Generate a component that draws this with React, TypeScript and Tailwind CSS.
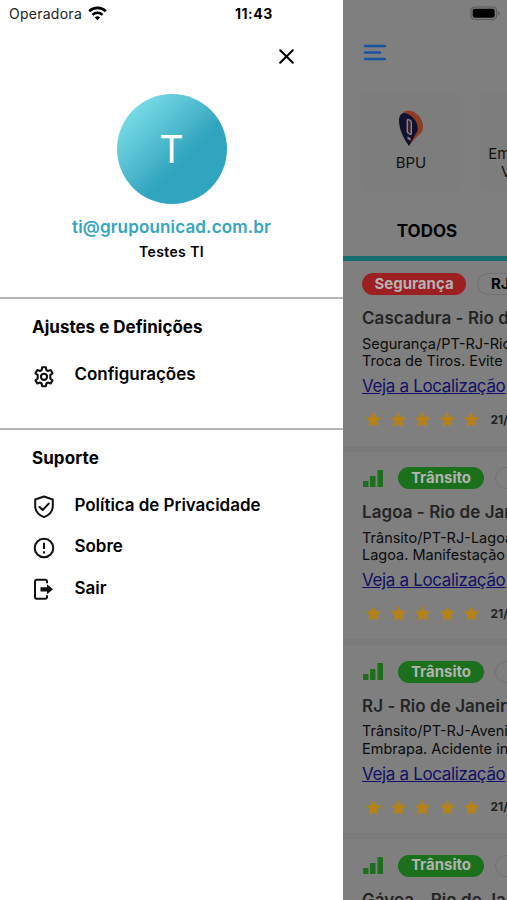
import type { ReactNode } from "react";

type Alert = {
  category: string;
  tone: "danger" | "traffic";
  tag?: string;
  title: string;
  lines: string[];
  date: string;
};

const ALERTS: Alert[] = [
  { category: "Segurança", tone: "danger", tag: "RJ", title: "Cascadura - Rio de", lines: ["Segurança/PT-RJ-Rio", "Troca de Tiros. Evite"], date: "21/1" },
  { category: "Trânsito", tone: "traffic", title: "Lagoa - Rio de Jan", lines: ["Trânsito/PT-RJ-Lagoa", "Lagoa. Manifestação"], date: "21/1" },
  { category: "Trânsito", tone: "traffic", title: "RJ - Rio de Janeiro", lines: ["Trânsito/PT-RJ-Aveni", "Embrapa. Acidente in"], date: "21/1" },
  { category: "Trânsito", tone: "traffic", title: "Gávea - Rio de Jan", lines: [], date: "21/1" }
];

function WifiIcon() {
  return (
    <svg width="19" height="15" viewBox="0 0 19 15" fill="none" stroke="#000">
      <path d="M1.2 5.3a12 12 0 0 1 16.6 0" strokeWidth="2.7" />
      <path d="M4.4 8.8a7.4 7.4 0 0 1 10.2 0" strokeWidth="2.5" />
      <path d="M9.5 14.2 6.8 11.4a4 4 0 0 1 5.4 0Z" fill="#000" stroke="none" />
    </svg>
  );
}

function BatteryIcon() {
  return (
    <svg width="31" height="15" viewBox="0 0 31 15">
      <rect x="1" y="1" width="25.5" height="12.5" rx="3.6" fill="none" stroke="#5a5a5a" strokeWidth="1.2" />
      <rect x="2.7" y="2.7" width="22" height="9" rx="2" fill="#000" />
      <path d="M28 5v4.6c1-.4 1.6-1.300 1.600-2.300S29 5.400 28 5Z" fill="#5a5a5a" />
    </svg>
  );
}

function GearIcon() {
  return (
    <svg width="24" height="24" viewBox="0 0 24 24" fill="none" stroke="#111" strokeWidth="2.1" strokeLinejoin="round">
      <path d="M10.200 2.300h3.600l.6 2.800 1.500.9 2.800-.9 1.800 3.100-2.200 1.900v3.400l2.200 1.900-1.800 3.100-2.800-.9-1.500.9-.6 2.800h-3.600l-.6-2.800-1.500-.9-2.800.9-1.800-3.100 2.200-1.900v-3.400L3.500 8.200l1.800-3.100 2.800.9 1.500-.9Z" />
      <circle cx="12" cy="11.800" r="3.100" />
    </svg>
  );
}

function ShieldIcon() {
  return (
    <svg width="24" height="24" viewBox="0 0 24 24" fill="none" stroke="#111" strokeWidth="2" strokeLinejoin="round" strokeLinecap="round">
      <path d="M12 1.500 3.200 4.500v6.300c0 5.500 3.700 9.300 8.800 11.400 5.100-2.100 8.800-5.900 8.800-11.400V4.500Z" />
      <path d="m7.500 12 3.200 3 6-6.400" />
    </svg>
  );
}

function AlertCircleIcon() {
  return (
    <svg width="24" height="24" viewBox="0 0 24 24" fill="none" stroke="#111" strokeWidth="2">
      <circle cx="12" cy="11" r="9.300" />
      <path d="M12 5.800v6.300M12 14.200v2.200" />
    </svg>
  );
}

function ExitIcon() {
  return (
    <svg width="24" height="24" viewBox="0 0 24 24" fill="none" stroke="#111" strokeWidth="2">
      <path d="M15 5.300V3.600c0-1-.8-1.800-1.800-1.800H4.800c-1 0-1.800.8-1.800 1.800V19c0 1 .8 1.800 1.800 1.800h8.400c1 0 1.800-.8 1.800-1.800v-1.700" />
      <path d="M8.500 9.200H15V6.300l6 5-6 5v-2.900H8.500Z" fill="#111" stroke="none" />
    </svg>
  );
}

function PinIcon() {
  return (
    <svg width="26" height="37" viewBox="0 0 26 37">
      <path d="M4.500 3C8-.3 13-.2 18 3.500c6 4.500 8 10.500 6.500 17-1 2.500-3 3.800-5 5.500L11 35.500Z" fill="#8f3d22" />
      <path d="M1 10.500C1 4.500 4.500 1 10 4c6.500 3.500 10.500 9.500 9.700 16.500L11 36C6.500 30 1 20 1 10.500Z" fill="#10132f" />
      <path d="M9.300 10.500c0-.9.600-1.200 1.300-.8l1.500.7c.8.4 1.200 1.100 1.200 2v10.800c0 .9-.5 1.300-1.200.9l-1.500-.7c-.8-.4-1.300-1.100-1.300-2Z" fill="#3a2430" stroke="#8e8085" strokeWidth="1.400" />
      <path d="m9.500 26.600 3.200 1.600v2.600L9.500 29Z" fill="#8e8085" />
    </svg>
  );
}

function SignalIcon() {
  return (
    <svg width="20" height="17" viewBox="0 0 20 17" fill="#1d6f1d">
      <rect x="0" y="11" width="5.500" height="6" rx=".8" />
      <rect x="7" y="6" width="5.500" height="11" rx=".8" />
      <rect x="14.500" y="0" width="5.500" height="17" rx=".8" />
    </svg>
  );
}

function StarIcon() {
  return (
    <svg className="shrink-0" width="15" height="15" viewBox="0 0 24 24" fill="#b5821a" stroke="#b5821a" strokeWidth="1" strokeLinejoin="round">
      <path d="m12 .8 3.500 7.400 8 1.100-5.900 5.600 1.500 8L12 19.100l-7.100 3.800 1.500-8L.5 9.300l8-1.100Z" />
    </svg>
  );
}

function MenuItem({ icon, label }: { icon: ReactNode; label: string }) {
  return (
    <button className="flex h-[41.500px] w-full items-center gap-[18.500px] text-left">
      <span className="mt-1">{icon}</span>
      <span className="text-[17px] font-semibold tracking-[-0.04px]">{label}</span>
    </button>
  );
}

function AlertCard({ alert }: { alert: Alert }) {
  return (
    <article className={`flex shrink-0 flex-col border-b-[6px] border-[#7a7a7a] pl-[19px] whitespace-nowrap ${alert.tone === "danger" ? "h-[190.500px] pt-3" : "h-[193.800px] pt-[15.500px]"}`}>
      <div className="flex h-[22px] shrink-0 items-center">
        {alert.tone === "traffic" ? <span className="mr-[15px] ml-[1px] shrink-0"><SignalIcon /></span> : null}
        <span className={`flex h-[22px] shrink-0 items-center justify-center rounded-full text-[15px] font-bold text-[#b3b3b3] ${alert.tone === "danger" ? "w-[104px] bg-[#9c2022]" : "w-[86px] bg-[#1b701b]"}`}>
          {alert.category}
        </span>
        <span className="ml-[11px] flex h-[22px] w-20 shrink-0 items-center rounded-full border border-[#727272] pl-[13px] text-[15px] font-bold">{alert.tag}</span>
      </div>
      <h3 className="mt-[11px] text-[17px] leading-6 font-semibold tracking-[0.05px] text-[#242424]">{alert.title}</h3>
      <div className="mt-[4.500px] text-[14.500px] leading-[17.500px] text-[#0c0c0c]">
        {alert.lines.map((line) => <p key={line}>{line}</p>)}
      </div>
      <a className="mt-[5.500px] text-[17px] leading-[22px] tracking-[-0.34px] text-[#130f66] underline">Veja a Localização</a>
      <div className="mt-[14.500px] ml-1 flex items-center gap-[9.500px]">
        {[1, 2, 3, 4, 5].map((star) => <StarIcon key={star} />)}
        <span className="ml-[2px] text-xs font-bold text-[#222]">{alert.date}</span>
      </div>
    </article>
  );
}

export default function App() {
  return (
    <div className="flex h-[900px] w-[507px] overflow-hidden bg-white font-['Inter','Liberation_Sans',sans-serif] text-black">
      <aside className="w-[343px] shrink-0">
        <header className="flex h-7 items-center pl-[9px]">
          <span className="w-[79px] pb-[2px] text-[14px] tracking-[0.26px] text-[#222]">Operadora</span>
          <span className="pb-[2px]"><WifiIcon /></span>
          <span className="ml-[128px] pb-[2px] text-[14px] font-bold tracking-[0.5px]">11:43</span>
        </header>
        <div className="flex h-[66px] justify-end pr-[49px] pt-[21px]">
          <svg width="15" height="15" viewBox="0 0 15 15" stroke="#000" strokeWidth="2" strokeLinecap="round">
            <path d="m1.200 1.200 12.600 12.600M13.800 1.200 1.200 13.800" />
          </svg>
        </div>
        <section className="flex h-[205px] flex-col items-center border-b-2 border-[#b5b5b5]">
          <div className="flex size-[110px] items-center justify-center rounded-full bg-linear-135 from-[#7de0e8] from-10% to-[#2fa5bf] to-60% text-[38px] text-white">T</div>
          <p className="mt-[10.500px] text-[17px] leading-6 font-semibold tracking-[0.16px] text-[#35a6c0]">ti@grupounicad.com.br</p>
          <p className="mt-[3.500px] text-[14px] leading-5 font-semibold tracking-[0.4px]">Testes TI</p>
        </section>
        <section className="h-[130.500px] border-b-2 border-[#b5b5b5] pt-4 pl-8">
          <h2 className="mb-[15px] text-[17px] leading-6 font-bold">Ajustes e Definições</h2>
          <MenuItem icon={<GearIcon />} label="Configurações" />
        </section>
        <section className="pt-4 pl-8">
          <h2 className="mb-[15px] text-[17px] leading-6 font-bold tracking-[0.08px]">Suporte</h2>
          <MenuItem icon={<ShieldIcon />} label="Política de Privacidade" />
          <MenuItem icon={<AlertCircleIcon />} label="Sobre" />
          <MenuItem icon={<ExitIcon />} label="Sair" />
        </section>
      </aside>
      <main className="flex min-w-0 flex-1 flex-col overflow-hidden bg-[#7f7f7f]">
        <div className="flex h-7 shrink-0 justify-end pt-[6px] pr-[6px]"><BatteryIcon /></div>
        <div className="h-[65px] shrink-0 pt-4 pl-5">
          <svg width="23" height="17" viewBox="0 0 23 17" stroke="#1755a3" strokeWidth="2.500" strokeLinecap="round">
            <path d="M2 2h20M2 8.500h15M2 15h20" />
          </svg>
        </div>
        <div className="flex h-[98px] shrink-0 gap-[19px] pl-[18px]">
          <div className="flex w-[100px] shrink-0 flex-col items-center rounded-md bg-[#7d7d7d] pt-[17px]">
            <PinIcon />
            <span className="mt-[6px] text-[15px] leading-5 text-[#111]">BPU</span>
          </div>
          <div className="flex w-[100px] shrink-0 flex-col items-center rounded-md bg-[#7d7d7d] pt-[52px] text-center text-[15px] leading-[17.500px] text-[#111]">
            <span>Emergência</span>
            <span>Viaturas</span>
          </div>
        </div>
        <div className="flex h-[65px] w-[168px] shrink-0 items-center justify-center pt-[17px] text-[17px] font-bold">TODOS</div>
        <div className="h-[5px] w-full shrink-0 bg-[#146c6e]" />
        {ALERTS.map((alert) => <AlertCard key={alert.title} alert={alert} />)}
      </main>
    </div>
  );
}
